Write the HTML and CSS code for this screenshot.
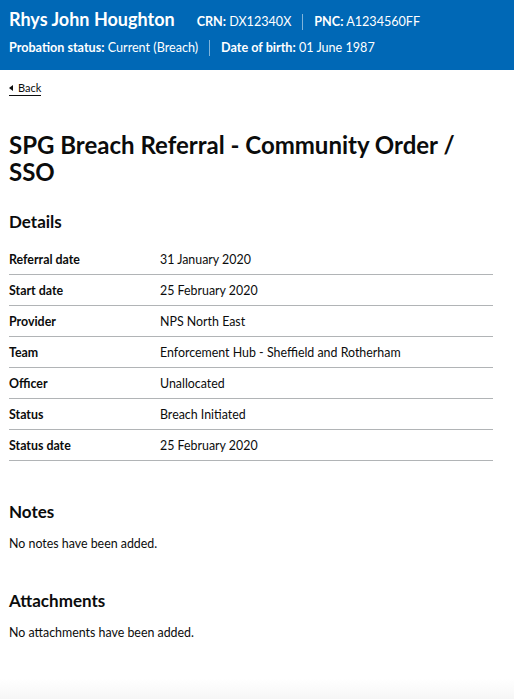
FILE: index.html
```html
<!DOCTYPE html>
<html lang="en">
<head>
<meta charset="utf-8">
<title>SPG Breach Referral</title>
<link rel="stylesheet" href="styles.css">
</head>
<body>
<header class="banner">
  <div class="banner-row">
    <span class="name">Rhys John Houghton</span>
    <span class="item first"><b>CRN:</b> DX12340X</span>
    <span class="item"><b>PNC:</b> A1234560FF</span>
  </div>
  <div class="banner-row small">
    <span class="item lead"><b>Probation status:</b> Current (Breach)</span>
    <span class="item"><b>Date of birth:</b> 01 June 1987</span>
  </div>
</header>
<main class="main">
  <a class="back" href="#"><span class="tri"></span>Back</a>
  <h1 class="title">SPG Breach Referral - Community Order / SSO</h1>
  <h2 class="heading">Details</h2>
  <dl class="summary">
    <div class="row"><dt>Referral date</dt><dd>31 January 2020</dd></div>
    <div class="row"><dt>Start date</dt><dd>25 February 2020</dd></div>
    <div class="row"><dt>Provider</dt><dd>NPS North East</dd></div>
    <div class="row"><dt>Team</dt><dd>Enforcement Hub - Sheffield and Rotherham</dd></div>
    <div class="row"><dt>Officer</dt><dd>Unallocated</dd></div>
    <div class="row"><dt>Status</dt><dd>Breach Initiated</dd></div>
    <div class="row"><dt>Status date</dt><dd>25 February 2020</dd></div>
  </dl>
  <h2 class="heading notes">Notes</h2>
  <p class="body">No notes have been added.</p>
  <h2 class="heading attach">Attachments</h2>
  <p class="body">No attachments have been added.</p>
</main>
<div class="fade"></div>
</body>
</html>
```
FILE: styles.css
```css
html, body {
  margin: 0;
  padding: 0;
  background: #fff;
}
body {
  font-family: Lato, "Liberation Sans", Arial, sans-serif;
  color: #0b0c0c;
}
.banner {
  background: #0068b6;
  color: #fff;
  padding: 8px 9px 0;
  height: 62px;
}
.banner-row {
  display: flex;
  align-items: baseline;
  font-size: 12.6px;
  height: 22px;
}
.banner-row.small {
  margin-top: 10px;
}
.name {
  font-size: 18px;
  font-weight: bold;
  margin-right: 22px;
}
.item {
  padding: 0 11px;
  border-left: 1px solid rgba(255,255,255,0.5);
  line-height: 16px;
}
.item.first, .item.lead {
  border-left: none;
  padding-left: 0;
}
.main {
  padding: 0 9px;
  width: 484px;
}
.back {
  display: inline-flex;
  align-items: center;
  margin-top: 11px;
  font-size: 11px;
  color: #0b0c0c;
  text-decoration: none;
  border-bottom: 1px solid #0b0c0c;
  line-height: 13px;
  padding-bottom: 1px;
}
.tri {
  width: 0;
  height: 0;
  border-top: 3px solid transparent;
  border-bottom: 3px solid transparent;
  border-right: 4px solid #0b0c0c;
  margin-right: 5px;
}
.title {
  font-size: 24px;
  line-height: 27px;
  margin: 35px 0 0;
}
.heading {
  font-size: 17px;
  line-height: 22px;
  margin: 26px 0 0;
}
.summary {
  margin: 11px 0 0;
}
.row {
  display: grid;
  grid-template-columns: 151px 1fr;
  border-bottom: 1px solid #b1b4b6;
  height: 30px;
  align-items: center;
  font-size: 12.4px;
}
dt {
  font-weight: bold;
}
dd {
  margin: 0;
}
.notes {
  margin-top: 40px;
}
.attach {
  margin-top: 39px;
}
.body {
  font-size: 12.4px;
  margin: 13px 0 0;
}
.fade {
  position: fixed;
  left: 0;
  right: 0;
  bottom: 0;
  height: 20px;
  background: linear-gradient(#fff, #f6f6f6);
}
```
